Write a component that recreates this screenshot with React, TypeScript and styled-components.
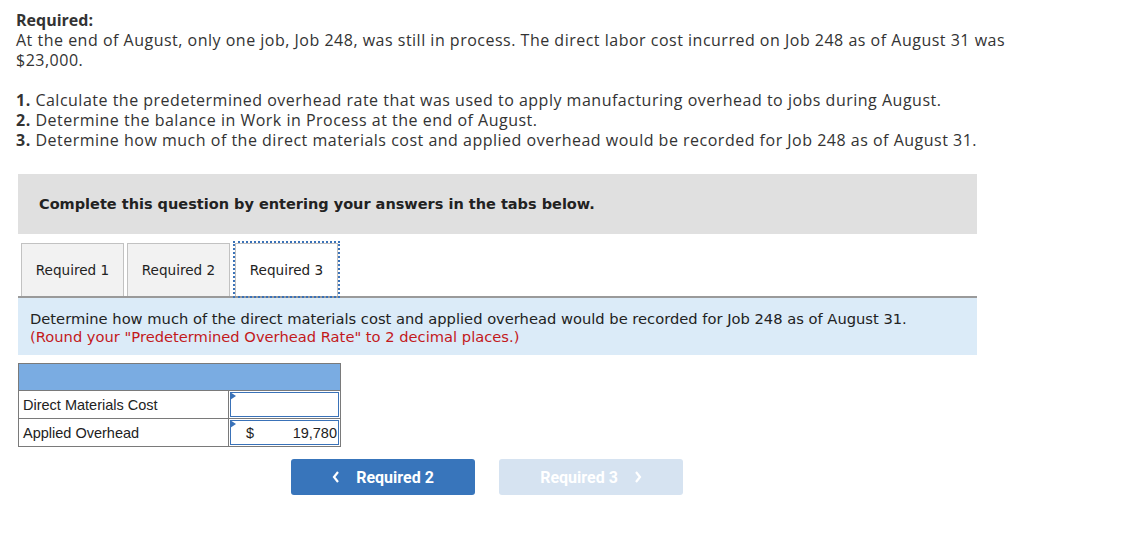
import React from 'react';
import styled, { createGlobalStyle } from 'styled-components';

const GlobalStyle = createGlobalStyle`
    body {
        margin: 0;
        background: #ffffff;
        font-family: 'Open Sans', 'Liberation Sans', sans-serif;
        color: #222222;
    }
`;

const Page = styled.div`
    width: 1134px;
    height: 558px;
    padding: 10px 0 0 16px;
    box-sizing: border-box;
    overflow: hidden;
`;

const Intro = styled.div`
    font-family: 'Open Sans', sans-serif;
    font-size: 16px;
    letter-spacing: 0.5px;
    line-height: 20px;
    color: #333333;
    width: 1000px;
`;

const Heading = styled.div`
    font-weight: 700;
    letter-spacing: 0;
`;

const Gap = styled.div`
    height: 20px;
`;

const Card = styled.div`
    width: 959px;
    margin: 24px 0 0 2px;
    font-family: Verdana, 'DejaVu Sans', 'Bitstream Vera Sans', sans-serif;
`;

const Banner = styled.div`
    height: 60px;
    background: #e0e0e0;
    display: flex;
    align-items: center;
    padding-left: 21px;
    font-size: 14.5px;
    font-weight: 700;
    color: #222222;
`;

const TabRow = styled.div`
    display: flex;
    gap: 3px;
    padding: 9px 0 0 3px;
    border-bottom: 2px solid #9a9a9a;
`;

const Tab = styled.div<{ $active?: boolean }>`
    height: 52px;
    width: 101px;
    box-sizing: content-box;
    display: flex;
    align-items: center;
    justify-content: center;
    font-size: 13.6px;
    color: #222222;
    background: ${p => (p.$active ? '#ffffff' : '#f2f2f2')};
    border: 1px solid #c2c2c2;
    border-bottom: none;
    outline: ${p => (p.$active ? '2px dotted #3a72b8' : 'none')};
    margin-left: ${p => (p.$active ? '2px' : '0')};
`;

const Panel = styled.div`
    background: #dbebf8;
    padding: 12px 12px 9px;
    font-size: 14.7px;
    line-height: 18px;
    color: #222222;
`;

const Note = styled.div`
    color: #c3191c;
`;

const Table = styled.table`
    border-collapse: collapse;
    margin: 8px 0 0 0;
    font-family: 'Liberation Sans', Arial, sans-serif;
    font-size: 14.5px;
    color: #222222;
`;

const HeadCell = styled.td`
    height: 26px;
    padding: 0;
    background: #7aace2;
    border: 1px solid #7a7a7a;
`;

const LabelCell = styled.td`
    width: 205px;
    height: 26px;
    padding: 0 0 0 4px;
    border: 1px solid #7a7a7a;
`;

const InputCell = styled.td`
    width: 111px;
    height: 26px;
    padding: 0;
    border: 1px solid #7a7a7a;
    position: relative;
`;

const InputBox = styled.div`
    margin: 1px;
    height: 23px;
    border: 1px solid #3a72b8;
    background: #ffffff;
    display: flex;
    align-items: center;
    justify-content: space-between;
    padding: 0 1px 0 15px;
`;

const Flag = styled.span`
    position: absolute;
    left: 1px;
    top: 1px;
    width: 0;
    height: 0;
    border-top: 4px solid transparent;
    border-bottom: 4px solid transparent;
    border-left: 6px solid #3a72b8;
`;

const NavRow = styled.div`
    display: flex;
    gap: 24px;
    margin: 12px 0 0 273px;
`;

const NavButton = styled.div<{ $disabled?: boolean }>`
    width: 184px;
    height: 36px;
    border-radius: 3px;
    background: ${p => (p.$disabled ? '#d6e3f1' : '#3875bb')};
    color: #ffffff;
    font-family: 'Roboto', sans-serif;
    font-weight: 700;
    font-size: 16px;
    display: flex;
    align-items: center;
    justify-content: center;
    gap: 16px;
`;

const Chevron = ({ dir }: { dir: 'left' | 'right' }) => (
    <svg width="8" height="12" viewBox="0 0 8 12">
        <path
            d={dir === 'left' ? 'M6 1 L2 6 L6 11' : 'M2 1 L6 6 L2 11'}
            stroke="#ffffff"
            strokeWidth="2.2"
            fill="none"
        />
    </svg>
);

const App = () => {
    return (
        <Page>
            <GlobalStyle />
            <Intro>
                <Heading>Required:</Heading>
                <div>
                    At the end of August, only one job, Job 248, was still in process. The direct labor cost incurred on Job 248 as of August 31 was $23,000.
                </div>
                <Gap />
                <div><b>1.</b> Calculate the predetermined overhead rate that was used to apply manufacturing overhead to jobs during August.</div>
                <div><b>2.</b> Determine the balance in Work in Process at the end of August.</div>
                <div><b>3.</b> Determine how much of the direct materials cost and applied overhead would be recorded for Job 248 as of August 31.</div>
            </Intro>
            <Card>
                <Banner>Complete this question by entering your answers in the tabs below.</Banner>
                <TabRow>
                    <Tab>Required 1</Tab>
                    <Tab>Required 2</Tab>
                    <Tab $active>Required 3</Tab>
                </TabRow>
                <Panel>
                    <div>Determine how much of the direct materials cost and applied overhead would be recorded for Job 248 as of August 31.</div>
                    <Note>(Round your "Predetermined Overhead Rate" to 2 decimal places.)</Note>
                </Panel>
                <Table>
                    <tbody>
                        <tr>
                            <HeadCell colSpan={2} />
                        </tr>
                        <tr>
                            <LabelCell>Direct Materials Cost</LabelCell>
                            <InputCell>
                                <Flag />
                                <InputBox />
                            </InputCell>
                        </tr>
                        <tr>
                            <LabelCell>Applied Overhead</LabelCell>
                            <InputCell>
                                <Flag />
                                <InputBox>
                                    <span>$</span>
                                    <span>19,780</span>
                                </InputBox>
                            </InputCell>
                        </tr>
                    </tbody>
                </Table>
                <NavRow>
                    <NavButton>
                        <Chevron dir="left" />
                        Required 2
                    </NavButton>
                    <NavButton $disabled>
                        Required 3
                        <Chevron dir="right" />
                    </NavButton>
                </NavRow>
            </Card>
        </Page>
    );
};

export default App;
